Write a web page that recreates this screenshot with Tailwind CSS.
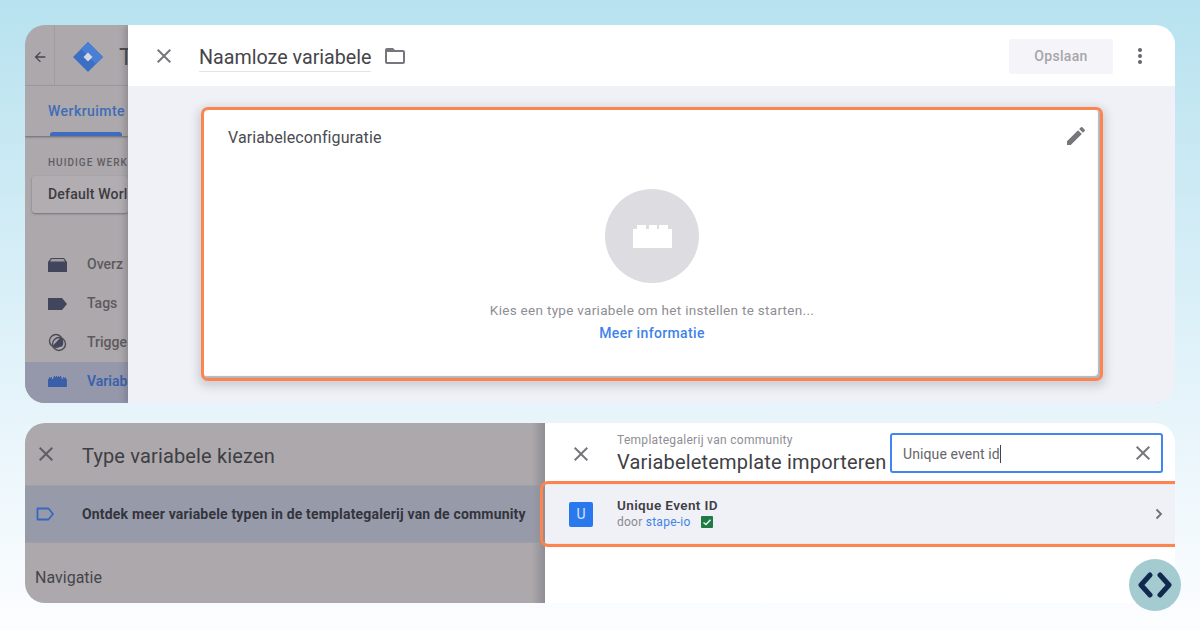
<!DOCTYPE html>
<html lang="nl">
<head>
  <meta charset="UTF-8">
  <meta name="viewport" content="width=device-width, initial-scale=1.0">
  <title>Unique Event ID</title>
  <script src="https://cdn.jsdelivr.net/npm/@tailwindcss/browser@4"></script>
</head>
<body class="relative w-[1200px] h-[630px] overflow-hidden bg-gradient-to-b from-[#b7e2ef] via-[#e3f3fa] via-60% to-[#fcfdff] font-['Roboto',sans-serif]">
  <div class="flex flex-col gap-5 px-[25px] pt-[25px]">

    <!-- top panel -->
    <section class="flex h-[378px] rounded-[20px] overflow-hidden">
      <aside class="w-[103px] shrink-0 bg-[#aca8ab] flex flex-col overflow-hidden whitespace-nowrap">
        <div class="h-[61px] shrink-0 flex items-center border-b border-[#a09ca0]">
          <div class="w-[29px] h-full shrink-0 flex items-center justify-center border-r border-[#a09ca0] box-content">
            <svg class="w-[16px] h-[16px] ml-[1px] mt-[3px]" viewBox="0 0 24 24" fill="#45454f"><path d="M20 11H7.800l5.600-5.600L12 4l-8 8 8 8 1.400-1.400L7.800 13H20z"/></svg>
          </div>
          <svg class="w-[32px] h-[32px] ml-[17px] mt-[3px] shrink-0" viewBox="0 0 32 32"><path d="M16 1 31 16 16 31 1 16z" fill="#3b6fc4"/><path d="M16 1 31 16 24 23 9 8z" fill="#4a7fd6"/><path d="M16 11.500 20.500 16 16 20.500 11.500 16z" fill="#d8d8de"/></svg>
          <span class="ml-[15px] mt-[3px] text-[24px] text-[#4a4a50]">T</span>
        </div>
        <div class="h-[50px] shrink-0 pl-[23px] pt-[15px] relative shadow-[0_1px_2px_rgba(60,60,70,0.6)] text-[14px] font-medium text-[#3f6cb8] tracking-[0.45px]">
          Werkruimte
          <div class="absolute left-[25px] bottom-0 w-[72px] h-[4px] rounded-t-[3px] bg-[#3f6cc0]"></div>
        </div>
        <div class="pl-[23px] pt-[21px] text-[10px] font-medium tracking-[1px] text-[#5f5d64] leading-3">HUIDIGE WERK</div>
        <div class="ml-[7px] mt-[7px] h-[37px] shrink-0 flex items-center pl-[16px] rounded-[3px] bg-[#b1adb0] shadow-[0_1px_2px_rgba(60,60,70,0.5)] text-[14px] font-medium text-[#3c3b42] tracking-[0.2px]">Default Worl</div>
        <nav class="mt-[32px] flex flex-col text-[14px] text-[#5c5a60] font-medium">
          <div class="h-[39px] flex items-center gap-[20px] pl-[23px]">
            <svg class="w-[19px] h-[14px] shrink-0" viewBox="0 0 19 14"><path d="M3 0h13l3 4v10H0V4z" fill="#41465c"/><path d="M3.500 1h12l1.600 2.600H2z" fill="#9f9ca2"/></svg>
            <span>Overz</span>
          </div>
          <div class="h-[39px] flex items-center gap-[20px] pl-[23px]">
            <svg class="w-[19px] h-[12px] shrink-0" viewBox="0 0 19 12"><path d="M0 0h14l5 6-5 6H0z" fill="#41465c"/></svg>
            <span>Tags</span>
          </div>
          <div class="h-[39px] flex items-center gap-[20px] pl-[23px]">
            <svg class="w-[19px] h-[19px] shrink-0" viewBox="0 0 19 19" fill="none"><circle cx="8" cy="8" r="6.500" stroke="#4c4c58" stroke-width="1.400"/><circle cx="11" cy="11" r="6.500" stroke="#4c4c58" stroke-width="1.400"/><path d="M5 12.500 12.500 4.600a6.500 6.500 0 0 1 1.700 8.900L6.500 14z" fill="#41465c"/></svg>
            <span>Trigge</span>
          </div>
          <div class="h-[41px] flex items-center gap-[20px] pl-[23px] pb-[2px] bg-[#9598ab] text-[#3a62ac] font-semibold">
            <svg class="w-[19px] h-[11px] shrink-0" viewBox="0 0 19 11"><path d="M0 3h1V1h1v1h1V1h1v2h1L6 0h1v1h1V0h1v1h1V0h1v1h1V0h1l.9 3h1V1h1v1h1V1h1v2h1v8H0z" fill="#3a5ea8"/></svg>
            <span>Variab</span>
          </div>
        </nav>
      </aside>

      <main class="flex-1 flex flex-col bg-[#f0f1f6] shadow-[-3px_0_6px_rgba(60,60,70,0.25)] z-10">
        <header class="h-[61px] shrink-0 bg-white flex items-center">
          <svg class="w-[24px] h-[24px] ml-[24px] shrink-0" viewBox="0 0 24 24" fill="#77767c"><path d="M19 6.400 17.600 5 12 10.600 6.400 5 5 6.400 10.600 12 5 17.600 6.400 19 12 13.400 17.600 19 19 17.600 13.400 12z"/></svg>
          <div class="ml-[23px] w-[172px] h-[33px] mt-[-1px] flex items-center pt-[6px] border-b border-[#e4e4e8] text-[19.700px] text-[#45454b] whitespace-nowrap">Naamloze variabele</div>
          <svg class="w-[24px] h-[24px] ml-[12px] mt-[1px] shrink-0" viewBox="0 0 24 24" fill="#77767c"><path d="M20 6h-8l-2-2H4c-1.100 0-2 .9-2 2v12c0 1.100.9 2 2 2h16c1.100 0 2-.9 2-2V8c0-1.100-.9-2-2-2zm0 12H4V8h16z"/></svg>
          <div class="ml-auto w-[104px] h-[35px] mt-[1px] flex items-center justify-center rounded-[2px] bg-[#f5f4f8] text-[14px] font-medium tracking-[0.3px] text-[#a6a5ab]">Opslaan</div>
          <svg class="w-[24px] h-[24px] ml-[15px] mr-[24px] shrink-0" viewBox="0 0 24 24" fill="#66656b"><circle cx="12" cy="6" r="2"/><circle cx="12" cy="12" r="2"/><circle cx="12" cy="18" r="2"/></svg>
        </header>
        <div class="flex-1 px-[76px] pt-[24px]">
          <div class="relative h-[268px] w-[896px] bg-white rounded-[4px] outline-[3px] outline-[#fb8450] shadow-[0_3px_8px_6px_rgba(90,90,105,0.22),inset_-2px_-2px_1px_rgba(90,90,100,0.45)] flex flex-col items-center">
            <div class="self-start ml-[24px] mt-[18px] text-[16px] leading-5 text-[#4b4b51] tracking-[0.1px]">Variabeleconfiguratie</div>
            <svg class="absolute top-[14px] right-[12px] w-[24px] h-[24px]" viewBox="0 0 24 24" fill="#77767c"><path d="M3 17.250V21h3.750L17.810 9.940l-3.750-3.750zM20.710 7.040a1 1 0 0 0 0-1.410l-2.340-2.340a1 1 0 0 0-1.410 0l-1.830 1.830 3.750 3.750z"/></svg>
            <div class="mt-[41px] w-[94px] h-[94px] rounded-full bg-[#dcdce1] flex items-center justify-center">
              <svg class="w-[39px] h-[23px]" viewBox="0 0 39 23" fill="#ffffff"><path d="M0 4h4V0h9v4h3V0h8v4h2V0h9v4h4v19H0z"/></svg>
            </div>
            <p class="mt-[17px] text-[13.500px] leading-5 text-[#8e8e94] tracking-[0.3px]">Kies een type variabele om het instellen te starten...</p>
            <a class="mt-[3px] text-[14px] leading-5 font-medium text-[#3f82ea] tracking-[0.35px]">Meer informatie</a>
          </div>
        </div>
      </main>
    </section>

    <!-- bottom panel -->
    <section class="flex h-[180px] rounded-[20px] overflow-hidden">
      <aside class="relative w-[520px] shrink-0 bg-[#aca8ab] flex flex-col whitespace-nowrap">
        <div class="h-[62px] shrink-0 flex items-center">
          <svg class="w-[24px] h-[24px] ml-[9px] shrink-0" viewBox="0 0 24 24" fill="#5f5e65"><path d="M19 6.400 17.600 5 12 10.600 6.400 5 5 6.400 10.600 12 5 17.600 6.400 19 12 13.400 17.600 19 19 17.600 13.400 12z"/></svg>
          <span class="ml-[24px] mt-[3px] text-[20px] tracking-[0.15px] text-[#3e3e45]">Type variabele kiezen</span>
        </div>
        <div class="h-[58px] shrink-0 flex items-center bg-[#979ba9] border-y border-[#a09fa6]">
          <svg class="w-[19px] h-[14px] ml-[11px] shrink-0" viewBox="0 0 19 14" fill="none"><path d="M1.500 1.500h11l4.500 5.500-4.500 5.500h-11z" stroke="#3767c0" stroke-width="1.800" stroke-linejoin="round"/></svg>
          <span class="ml-[27px] text-[14px] font-bold text-[#33343d] tracking-[0.18px]">Ontdek meer variabele typen in de templategalerij van de community</span>
        </div>
        <div class="pl-[10px] pt-[25px] text-[16px] leading-5 text-[#46454c]">Navigatie</div>
        <div class="absolute right-0 top-0 bottom-0 w-[13px] bg-gradient-to-r from-transparent to-[#8f8d94]"></div>
      </aside>

      <main class="relative flex-1 bg-white flex flex-col">
        <header class="h-[61px] shrink-0 flex items-center">
          <svg class="w-[24px] h-[24px] ml-[24px] shrink-0" viewBox="0 0 24 24" fill="#77767c"><path d="M19 6.400 17.600 5 12 10.600 6.400 5 5 6.400 10.600 12 5 17.600 6.400 19 12 13.400 17.600 19 19 17.600 13.400 12z"/></svg>
          <div class="ml-[24px] w-[273px] shrink-0 whitespace-nowrap">
            <div class="text-[12px] leading-[14px] text-[#8e8e94] tracking-[0.3px]">Templategalerij van community</div>
            <div class="text-[20px] leading-[24px] mt-[3px] text-[#3f3f45] tracking-[0.18px]">Variabeletemplate importeren</div>
          </div>
          <div class="w-[273px] h-[40px] shrink-0 mt-[-1px] flex items-center pl-[11px] pr-[6px] border-2 border-[#4284f0] rounded-[3px] text-[14px] text-[#66656c] tracking-[0.1px]">
            <span class="border-r border-[#44444a] leading-[18px] mt-[1px]">Unique event id</span>
            <svg class="w-[24px] h-[24px] ml-auto" viewBox="0 0 24 24" fill="#77767c"><path d="M19 6.400 17.600 5 12 10.600 6.400 5 5 6.400 10.600 12 5 17.600 6.400 19 12 13.400 17.600 19 19 17.600 13.400 12z"/></svg>
          </div>
        </header>
        <div class="h-[60px] shrink-0 flex items-center bg-[#f0f1f6] border-y border-[#e7e7ec]">
          <div class="w-[24px] h-[25px] ml-[24px] shrink-0 flex items-center justify-center rounded-[2px] bg-[#2a78ee] text-[14px] text-[#d6e4fb]">U</div>
          <div class="ml-[24px] mt-[-1px]">
            <div class="text-[13.500px] leading-4 font-semibold text-[#3f3f46] tracking-[0.38px]">Unique Event ID</div>
            <div class="flex items-center text-[12px] leading-4 mt-[1px] text-[#8a8a90] tracking-[0.25px]">
              door&nbsp;<span class="text-[#3f82ea]">stape-io</span>
              <svg class="w-[12px] h-[12px] ml-[10px]" viewBox="0 0 12 12"><rect width="12" height="12" rx="1" fill="#1f7a45"/><path d="M2.500 6.500 5 8.500 9.500 3.800" fill="none" stroke="#e8f4ec" stroke-width="1.500"/></svg>
            </div>
          </div>
          <svg class="w-[20px] h-[20px] ml-auto mr-[6px]" viewBox="0 0 20 20" fill="none"><path d="M7.500 5.500 12 10l-4.500 4.500" stroke="#6f6e75" stroke-width="1.800"/></svg>
        </div>
        <div class="absolute left-[-5px] right-[-12px] top-[58px] h-[66px] rounded-[8px] border-[3px] border-[#fb8450]"></div>
      </main>
    </section>
  </div>

  <div class="absolute left-[1129px] top-[559px] w-[52px] h-[52px] rounded-full bg-[#a3cbd0] flex items-center justify-center">
    <svg class="w-[34px] h-[26px]" viewBox="0 0 34 26" fill="none"><path d="M12 3 3 13l9 10M22 3l9 10-9 10" stroke="#12294f" stroke-width="5" stroke-linecap="round" stroke-linejoin="round"/></svg>
  </div>
</body>
</html>
